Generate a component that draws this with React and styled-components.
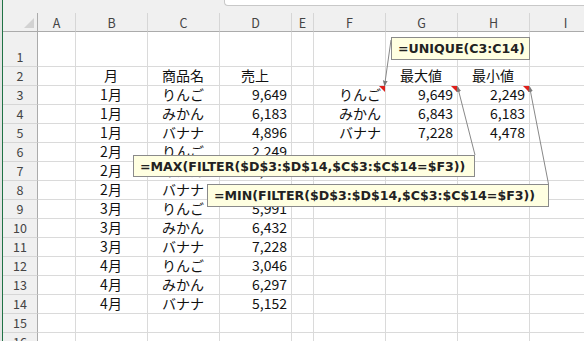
import React from 'react';
import styled, { createGlobalStyle } from 'styled-components';

const GlobalStyle = createGlobalStyle`
  html, body {
    margin: 0;
    padding: 0;
    background: #ffffff;
  }
  body {
    font-family: "Noto Sans CJK JP", "Noto Sans", sans-serif;
  }
`;

const COLUMNS = ['A', 'B', 'C', 'D', 'E', 'F', 'G', 'H', 'I'];
const COLUMN_WIDTHS = [38, 72, 72, 72, 22, 72, 72, 72, 72];
const ALIGN = ['left', 'center', 'center', 'right', 'left', 'right', 'right', 'right', 'left'];

const sales = [
  ['1月', 'りんご', '9,649'],
  ['1月', 'みかん', '6,183'],
  ['1月', 'バナナ', '4,896'],
  ['2月', 'りんご', '2,249'],
  ['2月', 'みかん', '6,843'],
  ['2月', 'バナナ', '4,478'],
  ['3月', 'りんご', '5,991'],
  ['3月', 'みかん', '6,432'],
  ['3月', 'バナナ', '7,228'],
  ['4月', 'りんご', '3,046'],
  ['4月', 'みかん', '6,297'],
  ['4月', 'バナナ', '5,152'],
];

const summary = [
  ['りんご', '9,649', '2,249'],
  ['みかん', '6,843', '6,183'],
  ['バナナ', '7,228', '4,478'],
];

// row 1 empty, row 2 titles, rows 3-14 data, then blanks
function buildRows() {
  const rows = [];
  rows.push(Array(9).fill(''));
  rows.push(['', '月', '商品名', '売上', '', '', '最大値', '最小値', '']);
  sales.forEach((s, i) => {
    const sum = summary[i] || ['', '', ''];
    rows.push(['', s[0], s[1], s[2], '', sum[0], sum[1], sum[2], '']);
  });
  rows.push(Array(9).fill(''));
  rows.push(Array(9).fill(''));
  return rows;
}

const Page = styled.div`
  position: relative;
  display: flex;
  width: 584px;
  height: 341px;
  overflow: hidden;
  background: #f0f0f0;
`;

const Edge = styled.div`
  flex: 0 0 2px;
  background: #e4e4e4;
  border-right: 1px solid #217346;
`;

const Main = styled.div`
  display: flex;
  flex-direction: column;
  flex: 1;
  min-width: 0;
`;

const TopBand = styled.div`
  display: flex;
  height: 13px;
  flex: 0 0 13px;
`;

const FormulaBox = styled.div`
  margin-left: 221px;
  flex: 1;
  height: 5px;
  background: #ffffff;
  border-left: 1px solid #c8c8c8;
  border-bottom: 1px solid #c8c8c8;
  border-bottom-left-radius: 4px;
`;

const Grid = styled.div`
  display: grid;
  grid-template-columns: 35px ${COLUMN_WIDTHS.map((w) => `${w}px`).join(' ')};
  grid-template-rows: 19px 35px repeat(15, 19px);
  background: #ffffff;
`;

const Corner = styled.div`
  position: relative;
  box-sizing: border-box;
  background: #f0f0f0;
  border-right: 1px solid #ababab;
  border-bottom: 1px solid #ababab;

  &::after {
    content: '';
    position: absolute;
    right: 3px;
    bottom: 3px;
    width: 0;
    height: 0;
    border-left: 10px solid transparent;
    border-bottom: 10px solid #d2d2d2;
  }
`;

const ColHead = styled.div`
  box-sizing: border-box;
  display: flex;
  align-items: center;
  justify-content: center;
  background: #f0f0f0;
  color: #444444;
  font-size: 12.5px;
  border-right: 1px solid #d6d6d6;
  border-bottom: 1px solid #ababab;
`;

const RowHead = styled.div`
  box-sizing: border-box;
  display: flex;
  align-items: flex-end;
  justify-content: center;
  padding-bottom: 1px;
  background: #f0f0f0;
  color: #444444;
  font-size: 12.5px;
  line-height: 17px;
  border-right: 1px solid #ababab;
  border-bottom: 1px solid #d6d6d6;
`;

const justify = { left: 'flex-start', center: 'center', right: 'flex-end' };

const Cell = styled.div`
  position: relative;
  box-sizing: border-box;
  display: flex;
  align-items: flex-end;
  justify-content: ${(p) => justify[p.$align]};
  padding: 0 4px 1px 3px;
  font-size: 14px;
  line-height: 17px;
  color: #111111;
  white-space: nowrap;
  border-right: 1px solid #dadada;
  border-bottom: 1px solid #dadada;

  &::after {
    content: '';
    display: ${(p) => (p.$note ? 'block' : 'none')};
    position: absolute;
    top: 0;
    right: 0;
    width: 0;
    height: 0;
    border-top: 6px solid #e0201b;
    border-left: 6px solid transparent;
  }
`;

const Note = styled.div`
  position: absolute;
  left: ${(p) => p.$x}px;
  top: ${(p) => p.$y}px;
  width: ${(p) => p.$w}px;
  height: ${(p) => p.$h}px;
  box-sizing: border-box;
  display: flex;
  align-items: center;
  padding-left: 6px;
  background: #ffffe1;
  border: 1px solid #8a8a8a;
  font-family: "DejaVu Sans", "Noto Sans", sans-serif;
  font-weight: bold;
  font-size: 12.6px;
  color: #222222;
  white-space: nowrap;
`;

const Leaders = styled.svg`
  position: absolute;
  left: 0;
  top: 0;
  pointer-events: none;
`;

function NoteLeaders() {
  return (
    <Leaders width="584" height="341" viewBox="0 0 584 341">
      <defs>
        <marker id="tip" viewBox="0 0 10 10" refX="9" refY="5" markerWidth="6" markerHeight="6" orient="auto">
          <path d="M0 1 L10 5 L0 9 z" fill="#7a7a7a" />
        </marker>
      </defs>
      <g stroke="#888888" strokeWidth="1" fill="none">
        <line x1="391" y1="40" x2="384.5" y2="86" markerEnd="url(#tip)" />
        <line x1="475" y1="155" x2="457.5" y2="86.5" markerEnd="url(#tip)" />
        <line x1="548.5" y1="184" x2="529.5" y2="86.5" markerEnd="url(#tip)" />
      </g>
    </Leaders>
  );
}

export default function App() {
  const rows = buildRows();

  return (
    <>
      <GlobalStyle />
      <Page>
        <Edge />
        <Main>
          <TopBand>
            <FormulaBox />
          </TopBand>
          <Grid>
            <Corner />
            {COLUMNS.map((c) => (
              <ColHead key={c}>{c}</ColHead>
            ))}
            {rows.map((row, r) => (
              <React.Fragment key={r}>
                <RowHead>{r + 1}</RowHead>
                {row.map((v, c) => (
                  <Cell
                    key={c}
                    $align={r === 1 ? 'center' : ALIGN[c]}
                    $note={r === 2 && c >= 5 && c <= 7}
                  >
                    {v}
                  </Cell>
                ))}
              </React.Fragment>
            ))}
          </Grid>
        </Main>
        <NoteLeaders />
        <Note $x={391} $y={37} $w={139} $h={23}>=UNIQUE(C3:C14)</Note>
        <Note $x={133} $y={155} $w={342} $h={22}>=MAX(FILTER($D$3:$D$14,$C$3:$C$14=$F3))</Note>
        <Note $x={207} $y={184} $w={342} $h={23}>=MIN(FILTER($D$3:$D$14,$C$3:$C$14=$F3))</Note>
      </Page>
    </>
  );
}
